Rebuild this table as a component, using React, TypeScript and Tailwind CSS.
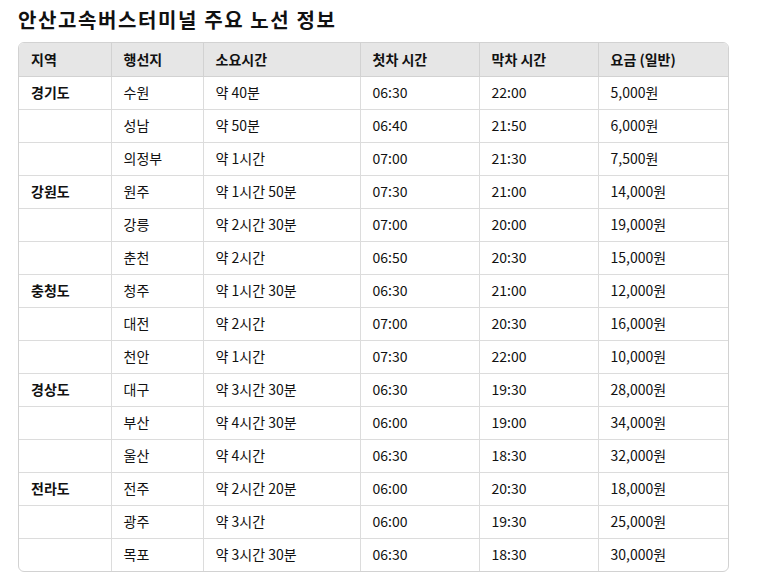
const ROWS = [
  { region: "경기도", dest: "수원", time: "약 40분", first: "06:30", last: "22:00", fare: "5,000원" },
  { region: "", dest: "성남", time: "약 50분", first: "06:40", last: "21:50", fare: "6,000원" },
  { region: "", dest: "의정부", time: "약 1시간", first: "07:00", last: "21:30", fare: "7,500원" },
  { region: "강원도", dest: "원주", time: "약 1시간 50분", first: "07:30", last: "21:00", fare: "14,000원" },
  { region: "", dest: "강릉", time: "약 2시간 30분", first: "07:00", last: "20:00", fare: "19,000원" },
  { region: "", dest: "춘천", time: "약 2시간", first: "06:50", last: "20:30", fare: "15,000원" },
  { region: "충청도", dest: "청주", time: "약 1시간 30분", first: "06:30", last: "21:00", fare: "12,000원" },
  { region: "", dest: "대전", time: "약 2시간", first: "07:00", last: "20:30", fare: "16,000원" },
  { region: "", dest: "천안", time: "약 1시간", first: "07:30", last: "22:00", fare: "10,000원" },
  { region: "경상도", dest: "대구", time: "약 3시간 30분", first: "06:30", last: "19:30", fare: "28,000원" },
  { region: "", dest: "부산", time: "약 4시간 30분", first: "06:00", last: "19:00", fare: "34,000원" },
  { region: "", dest: "울산", time: "약 4시간", first: "06:30", last: "18:30", fare: "32,000원" },
  { region: "전라도", dest: "전주", time: "약 2시간 20분", first: "06:00", last: "20:30", fare: "18,000원" },
  { region: "", dest: "광주", time: "약 3시간", first: "06:00", last: "19:30", fare: "25,000원" },
  { region: "", dest: "목포", time: "약 3시간 30분", first: "06:30", last: "18:30", fare: "30,000원" },
];

const HEADERS = ["지역", "행선지", "소요시간", "첫차 시간", "막차 시간", "요금 (일반)"];

export default function App() {
  return (
    <div
      className="min-h-[585px] bg-white px-[18px] pt-[5px] text-[#111]"
      style={{ fontFamily: '"Noto Sans CJK KR", "Noto Sans", sans-serif' }}
    >
      <h1 className="text-[20px] font-bold leading-[30px] tracking-[1.6px]">안산고속버스터미널 주요 노선 정보</h1>
      <div className="mt-[7px] w-[711px] overflow-hidden rounded-[6px] border border-[#d2d2d2]">
        <table className="w-full table-fixed border-collapse text-[14px]">
          <colgroup>
            <col className="w-[92px]" />
            <col className="w-[92px]" />
            <col className="w-[157px]" />
            <col className="w-[119px]" />
            <col className="w-[119px]" />
            <col />
          </colgroup>
          <thead>
            <tr className="h-[33px] bg-[#e6e6e6]">
              {HEADERS.map((h, i) => (
                <th
                  key={h}
                  className={`px-3 text-left font-semibold ${i < 5 ? "border-r border-[#d2d2d2]" : ""} border-b border-[#d2d2d2]`}
                >
                  {h}
                </th>
              ))}
            </tr>
          </thead>
          <tbody>
            {ROWS.map((r, idx) => {
              const last = idx === ROWS.length - 1;
              const cells = [r.dest, r.time, r.first, r.last, r.fare];
              return (
                <tr key={idx} className="h-[33px]">
                  <td className={`px-3 font-bold border-r border-[#dcdcdc] ${last ? "" : "border-b"}`}>{r.region}</td>
                  {cells.map((c, i) => (
                    <td
                      key={i}
                      className={`px-3 border-[#dcdcdc] ${i < 4 ? "border-r" : ""} ${last ? "" : "border-b"}`}
                    >
                      {c}
                    </td>
                  ))}
                </tr>
              );
            })}
          </tbody>
        </table>
      </div>
    </div>
  );
}
